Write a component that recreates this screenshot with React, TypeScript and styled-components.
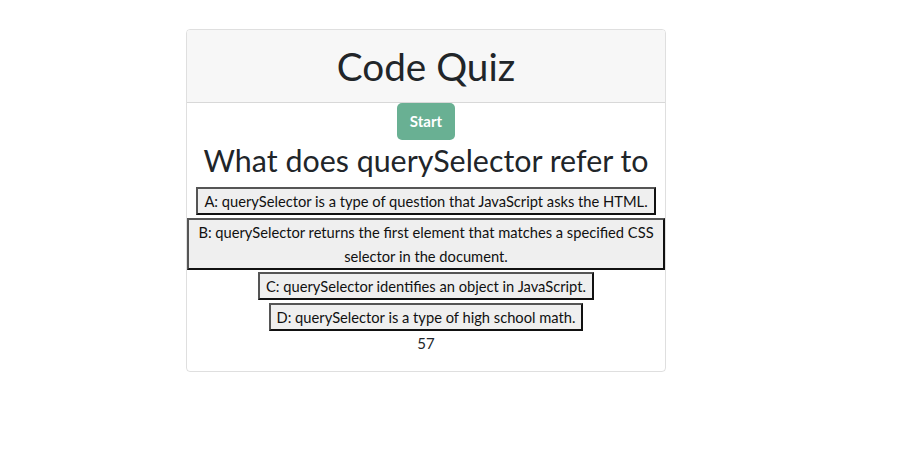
import styled, { createGlobalStyle } from "styled-components";

const GlobalStyle = createGlobalStyle`
    body {
        margin: 0;
        background: #fff;
        color: #212529;
        font-family: "Lato", "Open Sans", sans-serif;
    }
`;

const Page = styled.div`
    padding: 29px 0 0 186px;
`;

const Card = styled.div`
    width: 480px;
    box-sizing: border-box;
    border: 1px solid rgba(0, 0, 0, 0.125);
    border-radius: 4px;
    overflow: hidden;
    text-align: center;
`;

const CardHeader = styled.header`
    background: #f7f7f7;
    border-bottom: 1px solid rgba(0, 0, 0, 0.125);
    padding: 12px 20px;
`;

const Title = styled.h1`
    margin: 0;
    font-size: 38.7px;
    font-weight: 400;
    line-height: 48px;
`;

const CardBody = styled.div`
    display: flex;
    flex-direction: column;
    align-items: center;
    padding: 0 0 16px;
`;

const StartBtn = styled.button`
    font-family: inherit;
    font-size: 15px;
    font-weight: 700;
    line-height: 25px;
    color: #fff;
    background: #69b093;
    border: none;
    border-radius: 5px;
    padding: 6px 13px;
    cursor: pointer;
`;

const Question = styled.h2`
    margin: 1px 0 8px;
    font-size: 30.4px;
    font-weight: 400;
    line-height: 38px;
`;

const Answers = styled.div`
    display: flex;
    flex-direction: column;
    align-items: center;
    gap: 2.5px;
`;

const Answer = styled.button`
    font-family: inherit;
    font-size: 14.7px;
    line-height: 24px;
    color: #111;
    background: #efefef;
    border: 2px solid;
    border-color: #555 #111 #111 #555;
    padding: 0 6px;
    max-width: 100%;
    box-sizing: border-box;
    cursor: pointer;
`;

const Timer = styled.p`
    margin: 0;
    font-size: 15px;
    line-height: 24px;
`;

const answers = [
    "A: querySelector is a type of question that JavaScript asks the HTML.",
    "B: querySelector returns the first element that matches a specified CSS selector in the document.",
    "C: querySelector identifies an object in JavaScript.",
    "D: querySelector is a type of high school math.",
];

export default function App() {
    return (
        <Page>
            <GlobalStyle />
            <Card>
                <CardHeader>
                    <Title>Code Quiz</Title>
                </CardHeader>
                <CardBody>
                    <StartBtn>Start</StartBtn>
                    <Question>What does querySelector refer to</Question>
                    <Answers>
                        {answers.map((a) => (
                            <Answer key={a}>{a}</Answer>
                        ))}
                    </Answers>
                    <Timer>57</Timer>
                </CardBody>
            </Card>
        </Page>
    );
}
